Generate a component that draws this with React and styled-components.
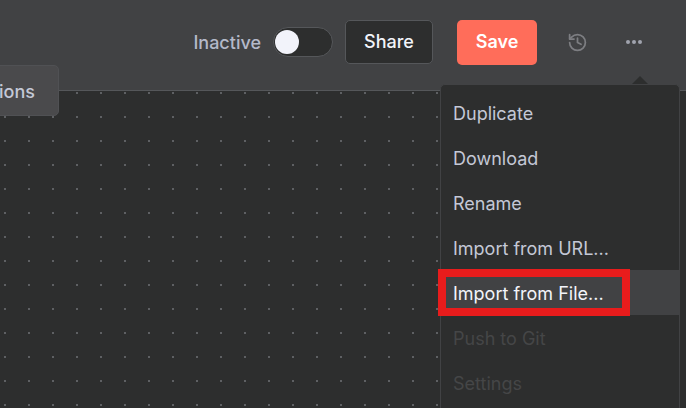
import React from "react";
import styled, { createGlobalStyle } from "styled-components";
import { History } from "lucide-react";

const GlobalStyle = createGlobalStyle`
  html, body {
    margin: 0;
    padding: 0;
    background: #2d2e2e;
    overflow: hidden;
  }
  * {
    box-sizing: border-box;
  }
`;

const Page = styled.div`
  position: relative;
  width: 686px;
  height: 408px;
  overflow: hidden;
  display: flex;
  flex-direction: column;
  font-family: Inter, "Liberation Sans", sans-serif;
`;

const Header = styled.header`
  height: 91px;
  flex-shrink: 0;
  background: #414244;
  border-bottom: 1px solid #55575a;
  display: flex;
  align-items: flex-start;
  padding: 20px 38px 0 0;
  justify-content: flex-end;
`;

const Status = styled.div`
  display: flex;
  align-items: center;
  gap: 12px;
  height: 44px;
  margin-right: 12px;
`;

const StatusLabel = styled.span`
  font-size: 18px;
  font-weight: 500;
  color: #b4b9c9;
`;

const Toggle = styled.div`
  width: 60px;
  height: 30px;
  border-radius: 15px;
  background: #2d2e2e;
  border: 1px solid #55575a;
  padding: 1px;
  display: flex;
  align-items: center;
`;

const Knob = styled.div`
  width: 24px;
  height: 24px;
  border-radius: 50%;
  background: #f2f3fa;
`;

const ShareButton = styled.button`
  width: 88px;
  height: 44px;
  margin-right: 24px;
  padding: 0 0 2px;
  border: 1px solid #55575a;
  border-radius: 5px;
  background: #2d2e2e;
  color: #f2f4fa;
  font: 500 18px Inter, "Liberation Sans", sans-serif;
`;

const SaveButton = styled.button`
  width: 80px;
  height: 45px;
  margin-right: 26px;
  padding: 0 0 2px;
  border: 0;
  border-radius: 5px;
  background: #ff6d5a;
  color: #ffffff;
  font: 600 18px Inter, "Liberation Sans", sans-serif;
`;

const IconSlot = styled.div`
  width: 28px;
  height: 44px;
  display: flex;
  align-items: center;
  justify-content: center;
  color: ${(p) => p.$color};
`;

const HistorySlot = styled(IconSlot)`
  margin-right: 29px;
`;

const MoreDots = styled.div`
  display: flex;
  gap: 2px;
`;

const Dot = styled.span`
  width: 4px;
  height: 4px;
  border-radius: 50%;
  background: #a0a3ae;
`;

const Canvas = styled.main`
  flex: 1;
  background-color: #2d2e2e;
  background-image: radial-gradient(circle, #5e6063 1px, transparent 1.2px);
  background-size: 24px 24px;
  background-position: -7px -10px;
`;

const TabsPill = styled.div`
  position: absolute;
  top: 65px;
  right: 627px;
  height: 51px;
  padding: 2px 23px 0 12px;
  display: flex;
  align-items: center;
  background: #4a4a4c;
  border: 1px solid #505154;
  border-radius: 5px;
  font-size: 18px;
  font-weight: 500;
  color: #c4c8d6;
  white-space: nowrap;
`;

const Menu = styled.div`
  position: absolute;
  top: 84px;
  left: 440px;
  width: 240px;
  height: 340px;
  padding-top: 5px;
  background: #2d2e2e;
  border: 1px solid #414244;
  border-radius: 5px;

  &::before {
    content: "";
    position: absolute;
    top: -9px;
    left: 191px;
    border-left: 8px solid transparent;
    border-right: 8px solid transparent;
    border-bottom: 8px solid #2d2e2e;
  }
`;

const MenuItem = styled.div`
  height: 45px;
  padding: 1px 0 0 12px;
  display: flex;
  align-items: center;
  font-size: 18px;
  font-weight: 400;
  color: ${(p) => (p.$disabled ? "#454647" : p.$active ? "#f2f4fa" : "#c4c8d6")};
  background: ${(p) => (p.$active ? "#414244" : "transparent")};
`;

const Highlight = styled.div`
  position: absolute;
  top: 269px;
  left: 438px;
  width: 192px;
  height: 47px;
  border: 8px solid #e81c1c;
`;

const items = [
  { label: "Duplicate" },
  { label: "Download" },
  { label: "Rename" },
  { label: "Import from URL..." },
  { label: "Import from File...", active: true },
  { label: "Push to Git", disabled: true },
  { label: "Settings", disabled: true },
];

export default function App() {
  return (
    <Page>
      <GlobalStyle />
      <Header>
        <Status>
          <StatusLabel>Inactive</StatusLabel>
          <Toggle>
            <Knob />
          </Toggle>
        </Status>
        <ShareButton>Share</ShareButton>
        <SaveButton>Save</SaveButton>
        <HistorySlot $color="#7d7e82">
          <History size={21} strokeWidth={2} />
        </HistorySlot>
        <IconSlot>
          <MoreDots>
            <Dot />
            <Dot />
            <Dot />
          </MoreDots>
        </IconSlot>
      </Header>
      <Canvas />
      <TabsPill>Executions</TabsPill>
      <Menu>
        {items.map((item) => (
          <MenuItem key={item.label} $active={item.active} $disabled={item.disabled}>
            {item.label}
          </MenuItem>
        ))}
      </Menu>
      <Highlight />
    </Page>
  );
}
